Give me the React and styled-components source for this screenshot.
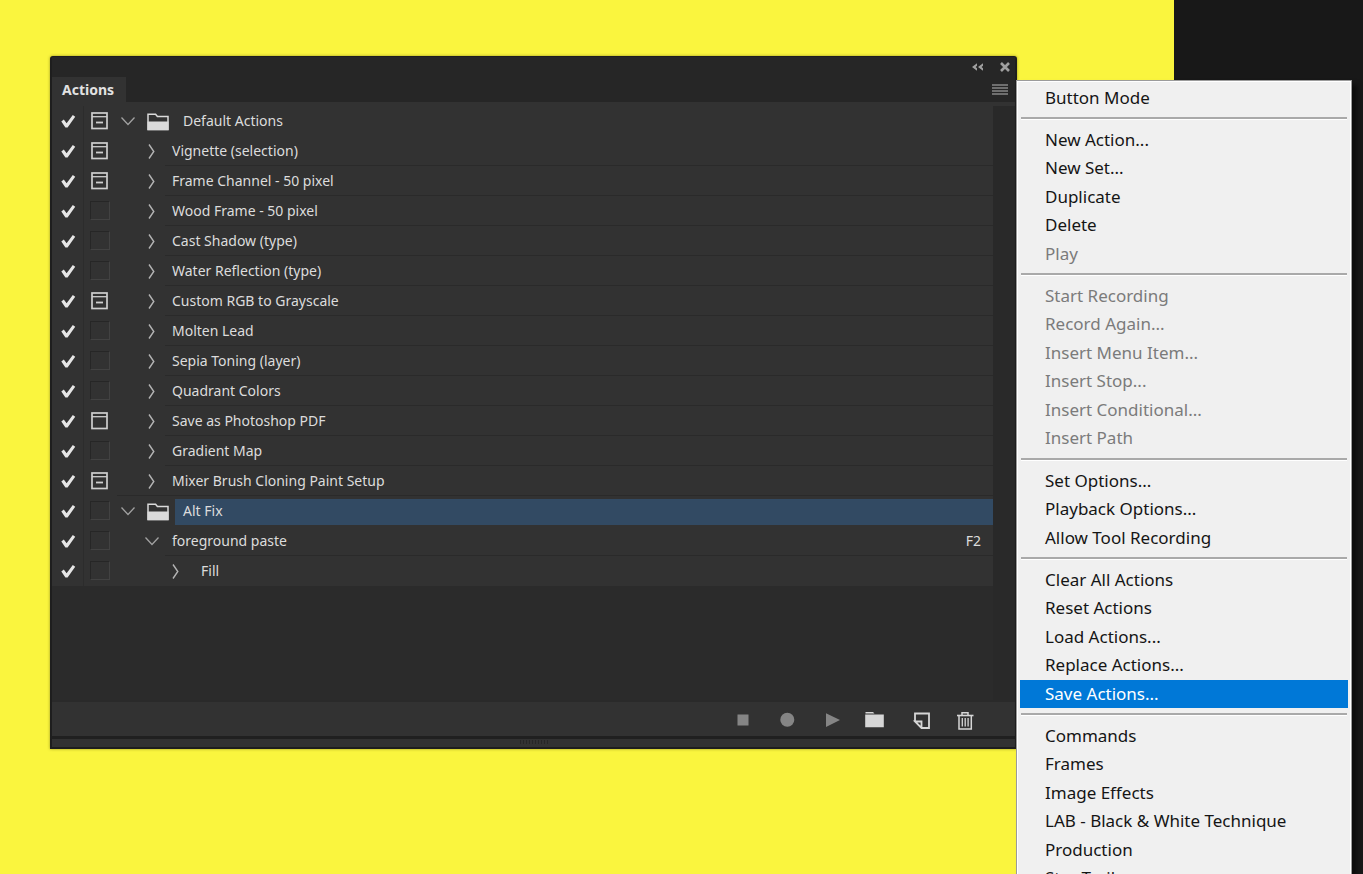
import React, { useState } from 'react';
import styled, { createGlobalStyle } from 'styled-components'

const GlobalStyle = createGlobalStyle`
    *, *::before {
        box-sizing: border-box;
    }
    body {
        margin: 0;
        background: #181818;
        font-family: "Noto Sans", "Open Sans", sans-serif;
    }
    button {
        padding: 0;
        border: 0;
        background: none;
        font: inherit;
        color: inherit;
    }
    svg {
        display: block;
    }
`

const Page = styled.div`
    display: grid;
    grid-template-columns: 1fr 189px;
    height: 100vh;
    overflow: hidden;
    background: #181818;
`

const Canvas = styled.main`
    padding: 56px 157px 0 50px;
    background: #faf53e;
`

const Panel = styled.section`
    position: relative;
    display: flex;
    flex-direction: column;
    border: 2px solid #1e1e1e;
    border-top-width: 1px;
    border-radius: 3px 3px 0 0;
    background: #323232;
    color: #dcdcdc;
    font-size: 14px;
    box-shadow: 0 0 3px rgba(60, 60, 0, 0.5);
`

const TitleBar = styled.header`
    display: flex;
    justify-content: flex-end;
    align-items: center;
    gap: 14px;
    height: 20px;
    padding-right: 3px;
    background: #262626;
    color: #a0a0a0;
`

const TabBar = styled.div`
    display: flex;
    justify-content: space-between;
    align-items: stretch;
    height: 25px;
    padding-right: 7px;
    background: #262626;
    color: #868686;
`

const Tab = styled.button`
    padding: 0 12px 0 10px;
    background: #323232;
    color: #e2e2e2;
    font-weight: 700;
    line-height: 24px;
`

const Body = styled.div`
    display: grid;
    grid-template-columns: 1fr 22px;
    min-height: 600px;
    padding-top: 4px;
    border-bottom: 2px solid #2a2a2a;
`

const List = styled.ul`
    margin: 0;
    padding: 0;
    list-style: none;
    background: #2b2b2b;
`

const ScrollTrack = styled.div`
    background: #292929;
`

const Row = styled.li`
    display: grid;
    grid-template-columns: 32px 33px 1fr;
    height: 30px;
    background: #323232;
`

const CheckLabel = styled.label`
    display: flex;
    align-items: center;
    padding-left: 9px;
    border-right: 1px solid #2c2c2c;
`

const CheckInput = styled.input`
    appearance: none;
    position: absolute;
    margin: 0;

    &:not(:checked) + svg {
        visibility: hidden;
    }
`

const DialogToggle = styled.button`
    display: flex;
    align-items: center;
    padding: 0 0 1px 6px;
`

const EmptyBox = styled.span`
    width: 20px;
    height: 19px;
    border: 1px solid;
    border-color: #262626 #424242 #424242 #262626;
`

const Content = styled.div`
    display: flex;
    padding-left: ${props => props.$indent}px;
    border-bottom: ${props => (props.$line ? '1px solid #2a2a2a' : '0')};
`

const Arrow = styled.button`
    flex: none;
    display: flex;
    align-items: center;
    width: ${props => props.$width}px;
`

const FolderCell = styled.span`
    display: flex;
    align-items: center;
    width: 28px;
`

const Name = styled.div`
    flex: 1;
    display: flex;
    justify-content: space-between;
    padding: 0 12px 0 7px;
    border-bottom: ${props => (props.$line ? '1px solid #2a2a2a' : '0')};
    line-height: 29px;
    white-space: nowrap;
`

const SetName = styled(Name)`
    height: 26px;
    margin-top: 3px;
    padding-left: 8px;
    border-bottom: 0;
    background: ${props => (props.$selected ? '#324a63' : 'transparent')};
    line-height: 24px;
`

const Toolbar = styled.footer`
    display: flex;
    justify-content: flex-end;
    height: 34px;
    padding-right: 30px;
`

const ToolButton = styled.button`
    display: flex;
    justify-content: center;
    align-items: center;
    width: 44px;
    color: ${props => (props.disabled ? '#858585' : '#d6d6d6')};
`

const Grip = styled.div`
    display: flex;
    justify-content: center;
    height: 11px;
    border-top: 3px solid #202020;
`

const Menu = styled.nav`
    position: absolute;
    top: 23px;
    left: calc(100% + 1px);
    z-index: 1;
    width: 336px;
    padding: 3px 2px;
    border: 1px solid #9b9b9b;
    background: #f0f0f0;
    box-shadow: inset 0 0 0 1px #fff, 5px 5px 5px rgba(0, 0, 0, 0.5);
    color: #151515;
    font-size: 17px;
`

const MenuGroup = styled.ul`
    margin: 0;
    padding: 0 1px;
    list-style: none;

    & + & {
        margin-top: 5px;
    }

    & + &::before {
        content: '';
        display: block;
        height: 2px;
        margin: 0 1px 7px;
        background: #a9a9a9;
        box-shadow: 0 1px #fff;
    }
`

const MenuItem = styled.li`
    height: 28px;

    &:nth-child(even) {
        height: 29px;
    }
`

const MenuButton = styled.button`
    width: 100%;
    height: 28px;
    padding-left: 25px;
    background: ${props => (props.$active ? '#0078d7' : 'transparent')};
    color: ${props => (props.$active ? '#fff' : props.disabled ? '#7b7b7b' : 'inherit')};
    line-height: 28px;
    text-align: left;
    white-space: nowrap;
`

const rows = [
    { name: 'Default Actions', type: 'set', dialog: 'some', open: true },
    { name: 'Vignette (selection)', dialog: 'some' },
    { name: 'Frame Channel - 50 pixel', dialog: 'some' },
    { name: 'Wood Frame - 50 pixel' },
    { name: 'Cast Shadow (type)' },
    { name: 'Water Reflection (type)' },
    { name: 'Custom RGB to Grayscale', dialog: 'some' },
    { name: 'Molten Lead' },
    { name: 'Sepia Toning (layer)' },
    { name: 'Quadrant Colors' },
    { name: 'Save as Photoshop PDF', dialog: 'all' },
    { name: 'Gradient Map' },
    { name: 'Mixer Brush Cloning Paint Setup', dialog: 'some' },
    { name: 'Alt Fix', type: 'set', open: true, selected: true },
    { name: 'foreground paste', open: true, shortcut: 'F2' },
    { name: 'Fill', type: 'step' },
]

const menu = [
    [{ name: 'Button Mode' }],
    [
        { name: 'New Action...' },
        { name: 'New Set...' },
        { name: 'Duplicate' },
        { name: 'Delete' },
        { name: 'Play', disabled: true },
    ],
    [
        { name: 'Start Recording', disabled: true },
        { name: 'Record Again...', disabled: true },
        { name: 'Insert Menu Item...', disabled: true },
        { name: 'Insert Stop...', disabled: true },
        { name: 'Insert Conditional...', disabled: true },
        { name: 'Insert Path', disabled: true },
    ],
    [
        { name: 'Set Options...' },
        { name: 'Playback Options...' },
        { name: 'Allow Tool Recording' },
    ],
    [
        { name: 'Clear All Actions' },
        { name: 'Reset Actions' },
        { name: 'Load Actions...' },
        { name: 'Replace Actions...' },
        { name: 'Save Actions...', active: true },
    ],
    [
        { name: 'Commands' },
        { name: 'Frames' },
        { name: 'Image Effects' },
        { name: 'LAB - Black & White Technique' },
        { name: 'Production' },
        { name: 'Star Trails' },
    ],
]

const TickIcon = () => (
    <svg width="15" height="16" viewBox="0 0 15 16">
        <path d="M0.3 8.6 2.8 6.6 5.6 10.2 11.8 2 14.2 3.8 6.6 14.6H4.4Z" fill="#e6e6e6" />
    </svg>
)

const DialogIcon = ({ partial }) => (
    <svg width="19" height="19" viewBox="0 0 19 19" fill="none" stroke="#cfcfcf">
        <rect x="2" y="2" width="15" height="15.5" strokeWidth="1.7" />
        <path d="M2 5.7H17" strokeWidth="1.3" />
        {partial && <path d="M6 11.5H13" strokeWidth="1.8" />}
    </svg>
)

const DownIcon = () => (
    <svg width="16" height="16" viewBox="0 0 16 16" fill="none" stroke="#a2a2a2" strokeWidth="1.3">
        <path d="M1.5 4.5 8 11.5 14.5 4.5" />
    </svg>
)

const RightIcon = () => (
    <svg width="16" height="16" viewBox="0 0 16 16" fill="none" stroke="#b4b4b4" strokeWidth="1.4">
        <path d="M5 1.5 9.8 8.5 5 15.5" />
    </svg>
)

const FolderIcon = () => (
    <svg width="22" height="20" viewBox="0 0 22 20">
        <path d="M1 18.5V3.2H8.6L10.4 5.5H21V18.5Z" fill="none" stroke="#dadada" strokeWidth="1.5" />
        <path d="M.5 10.5H21.5V19.2H.5Z" fill="#dadada" />
    </svg>
)

const CollapseIcon = () => (
    <svg width="14" height="10" viewBox="0 0 14 10" fill="currentColor">
        <path d="M7 1.2V3.8L5.6 5 7 6.2V8.8L2 5ZM13 1.2V3.8L11.6 5 13 6.2V8.8L8 5Z" />
    </svg>
)

const CloseIcon = () => (
    <svg width="14" height="12" viewBox="0 0 14 12" stroke="currentColor" strokeWidth="2.6">
        <path d="M3 2 11 10M11 2 3 10" />
    </svg>
)

const LinesIcon = () => (
    <svg width="16" height="12" viewBox="0 0 16 12" stroke="currentColor" strokeWidth="1.4">
        <path d="M0 1H16M0 4H16M0 7H16M0 10H16" />
    </svg>
)

const StopIcon = () => (
    <svg width="24" height="24" viewBox="0 0 24 24" fill="currentColor">
        <rect x="6.5" y="7.5" width="11" height="11" />
    </svg>
)

const RecordIcon = () => (
    <svg width="24" height="24" viewBox="0 0 24 24" fill="currentColor">
        <circle cx="12.3" cy="12.8" r="7" />
    </svg>
)

const PlayIcon = () => (
    <svg width="24" height="24" viewBox="0 0 24 24" fill="currentColor">
        <path d="M7 6.3 21 13 7 20Z" />
    </svg>
)

const NewSetIcon = () => (
    <svg width="24" height="24" viewBox="0 0 24 24" fill="currentColor">
        <path d="M2.5 5H10L11.5 6.5H2.5ZM2.2 7.5H20.8V20.3H2.2Z" />
    </svg>
)

const NewActionIcon = () => (
    <svg width="24" height="24" viewBox="0 0 24 24" fill="none" stroke="currentColor">
        <path d="M8 14.5V6.5H22V21H14.5L8 14.5H14.5V21" strokeWidth="1.8" />
    </svg>
)

const TrashIcon = () => (
    <svg width="24" height="24" viewBox="0 0 24 24" fill="none" stroke="currentColor">
        <path d="M6 8.5H22.5" strokeWidth="1.6" />
        <path d="M11 8V5.8H17V8M8 9V22H20.3V9" strokeWidth="1.5" />
        <path d="M11.3 11V19.5M14.2 11V19.5M17.1 11V19.5" strokeWidth="1.3" />
    </svg>
)

const GripIcon = () => (
    <svg width="28" height="6" viewBox="0 0 28 6" stroke="#262626">
        <path d="M.5 1V5M3.5 1V5M6.5 1V5M9.5 1V5M12.5 1V5M15.5 1V5M18.5 1V5M21.5 1V5M24.5 1V5M27.5 1V5" />
    </svg>
)

const tools = [
    { name: 'Stop', icon: StopIcon, disabled: true },
    { name: 'Record', icon: RecordIcon, disabled: true },
    { name: 'Play selection', icon: PlayIcon, disabled: true },
    { name: 'Create new set', icon: NewSetIcon },
    { name: 'Create new action', icon: NewActionIcon },
    { name: 'Delete', icon: TrashIcon },
]

function ActionRow({ row, lastInSet }) {
    const [checked, setChecked] = useState(true)
    const isSet = row.type === 'set'
    const isStep = row.type === 'step'
    const Label = isSet ? SetName : Name

    return (
        <Row>
            <CheckLabel>
                <CheckInput
                    type="checkbox"
                    aria-label={row.name}
                    checked={checked}
                    onChange={e => setChecked(e.target.checked)}
                />
                <TickIcon />
            </CheckLabel>
            <DialogToggle aria-label={`Toggle dialog for ${row.name}`}>
                {row.dialog ? <DialogIcon partial={row.dialog === 'some'} /> : <EmptyBox />}
            </DialogToggle>
            <Content $indent={isSet ? 3 : isStep ? 51 : 27} $line={lastInSet}>
                <Arrow $width={isSet ? 27 : isStep ? 26 : 21} aria-label={row.open ? 'Collapse' : 'Expand'}>
                    {row.open ? <DownIcon /> : <RightIcon />}
                </Arrow>
                {isSet && <FolderCell><FolderIcon /></FolderCell>}
                <Label $selected={row.selected} $line={!isStep && !lastInSet}>
                    <span>{row.name}</span>
                    {row.shortcut && <span>{row.shortcut}</span>}
                </Label>
            </Content>
        </Row>
    )
}

function App() {
    return (
        <Page>
            <GlobalStyle />
            <Canvas>
                <Panel>
                    <TitleBar>
                        <button aria-label="Collapse panel"><CollapseIcon /></button>
                        <button aria-label="Close panel"><CloseIcon /></button>
                    </TitleBar>
                    <TabBar>
                        <Tab>Actions</Tab>
                        <button aria-label="Panel menu"><LinesIcon /></button>
                    </TabBar>
                    <Body>
                        <List>
                            {rows.map((row, i) => (
                                <ActionRow
                                    key={row.name}
                                    row={row}
                                    lastInSet={rows[i + 1] !== undefined && rows[i + 1].type === 'set'}
                                />
                            ))}
                        </List>
                        <ScrollTrack />
                    </Body>
                    <Toolbar>
                        {tools.map(tool => (
                            <ToolButton key={tool.name} aria-label={tool.name} disabled={tool.disabled}>
                                <tool.icon />
                            </ToolButton>
                        ))}
                    </Toolbar>
                    <Grip><GripIcon /></Grip>
                    <Menu>
                        {menu.map((group, i) => (
                            <MenuGroup key={i}>
                                {group.map(item => (
                                    <MenuItem key={item.name}>
                                        <MenuButton $active={item.active} disabled={item.disabled}>
                                            {item.name}
                                        </MenuButton>
                                    </MenuItem>
                                ))}
                            </MenuGroup>
                        ))}
                    </Menu>
                </Panel>
            </Canvas>
        </Page>
    );
}

export default App;
